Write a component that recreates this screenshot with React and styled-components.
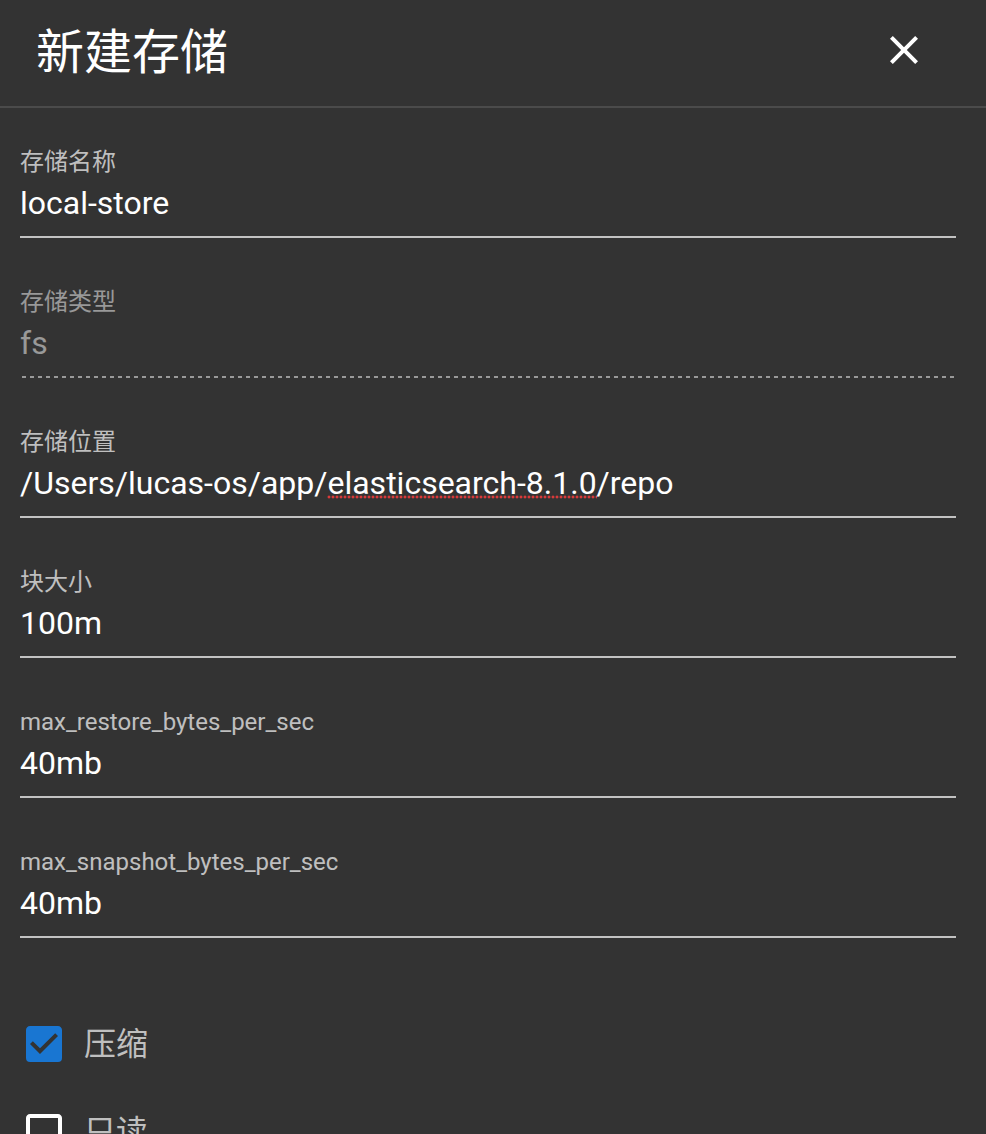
import React from 'react';
import styled, { createGlobalStyle } from 'styled-components';

const GlobalStyle = createGlobalStyle`
  html, body {
    margin: 0;
    padding: 0;
    background: #333333;
    overflow: hidden;
  }
  body {
    font-family: Roboto, "Noto Sans CJK SC", sans-serif;
    -webkit-font-smoothing: antialiased;
  }
`;

const fields = [
  { label: '存储名称', value: 'local-store' },
  { label: '存储类型', value: 'fs', disabled: true },
  { label: '存储位置', value: '/Users/lucas-os/app/', misspelled: 'elasticsearch-8.1.0', rest: '/repo' },
  { label: '块大小', value: '100m' },
  { label: 'max_restore_bytes_per_sec', value: '40mb' },
  { label: 'max_snapshot_bytes_per_sec', value: '40mb' },
];

const CloseIcon = () => (
  <svg width="48" height="48" viewBox="0 0 24 24">
    <path
      fill="#ffffff"
      d="M19,6.41L17.59,5L12,10.59L6.41,5L5,6.41L10.59,12L5,17.59L6.41,19L12,13.41L17.59,19L19,17.59L13.41,12L19,6.41Z"
    />
  </svg>
);

const CheckIcon = ({ checked }) => (
  <svg width="48" height="48" viewBox="0 0 24 24">
    {checked ? (
      <path
        fill="#1976d2"
        fillRule="evenodd"
        d="M10,17L5,12L6.41,10.58L10,14.17L17.59,6.58L19,8L10,17M19,3H5C3.89,3 3,3.89 3,5V19A2,2 0 0,0 5,21H19A2,2 0 0,0 21,19V5C21,3.89 20.1,3 19,3Z"
      />
    ) : (
      <path
        fill="#ffffff"
        d="M19,3H5C3.89,3 3,3.89 3,5V19A2,2 0 0,0 5,21H19A2,2 0 0,0 21,19V5C21,3.89 20.1,3 19,3M19,5V19H5V5H19Z"
      />
    )}
  </svg>
);

export default function App() {
  return (
    <>
      <GlobalStyle />
      <Dialog>
        <Header>
          <Title>新建存储</Title>
          <CloseButton aria-label="close">
            <CloseIcon />
          </CloseButton>
        </Header>
        <Body>
          {fields.map((f) => (
            <Field key={f.label} $disabled={f.disabled}>
              <Label $disabled={f.disabled}>{f.label}</Label>
              <Value $disabled={f.disabled}>
                {f.value}
                {f.misspelled && <Misspelled>{f.misspelled}</Misspelled>}
                {f.rest}
              </Value>
            </Field>
          ))}
          <Checks>
            <CheckRow>
              <CheckIcon checked />
              <CheckLabel>压缩</CheckLabel>
            </CheckRow>
            <CheckRow>
              <CheckIcon />
              <CheckLabel>只读</CheckLabel>
            </CheckRow>
          </Checks>
        </Body>
      </Dialog>
    </>
  );
}

const Dialog = styled.div`
  width: 986px;
  height: 1134px;
  background: #333333;
  color: #ffffff;
  overflow: hidden;
`;

const Header = styled.div`
  display: flex;
  justify-content: space-between;
  align-items: center;
  height: 106px;
  padding: 0 58px 0 36px;
  border-bottom: 2px solid #4b4b4b;
`;

const Title = styled.h2`
  margin: 0;
  font-size: 48px;
  line-height: 48px;
  font-weight: 400;
  color: #ffffff;
`;

const CloseButton = styled.button`
  display: flex;
  padding: 0;
  margin-top: -6px;
  border: none;
  background: transparent;
  cursor: pointer;
`;

const Body = styled.div`
  display: flex;
  flex-direction: column;
  gap: 48px;
  padding: 38px 30px 0 20px;
`;

const Field = styled.div`
  display: flex;
  flex-direction: column;
  gap: 5px;
  padding-bottom: 13px;
  border-bottom: 2px ${({ $disabled }) => ($disabled ? 'none' : 'solid')} #c2c2c2;
  background-image: ${({ $disabled }) =>
    $disabled
      ? 'repeating-linear-gradient(to right, #9a9a9a 0 4px, transparent 4px 8px)'
      : 'none'};
  background-size: 100% 2px;
  background-position: 2px bottom;
  background-repeat: no-repeat;
  ${({ $disabled }) => $disabled && 'padding-bottom: 15px;'}
`;

const Label = styled.div`
  font-size: 24px;
  line-height: 32px;
  color: ${({ $disabled }) => ($disabled ? 'rgba(255,255,255,0.5)' : 'rgba(255,255,255,0.7)')};
`;

const Value = styled.div`
  font-size: 32px;
  line-height: 40px;
  white-space: nowrap;
  color: ${({ $disabled }) => ($disabled ? 'rgba(255,255,255,0.5)' : '#ffffff')};
`;

const Misspelled = styled.span`
  background-image: radial-gradient(circle, #d93a3a 1.3px, transparent 1.7px);
  background-size: 4px 4px;
  background-repeat: repeat-x;
  background-position: 0 calc(100% - 3px);
`;

const Checks = styled.div`
  display: flex;
  flex-direction: column;
  gap: 40px;
  padding-top: 34px;
`;

const CheckRow = styled.div`
  display: flex;
  align-items: center;
  gap: 16px;
  height: 48px;
`;

const CheckLabel = styled.span`
  font-size: 32px;
  line-height: 48px;
  color: rgba(255, 255, 255, 0.7);
`;
